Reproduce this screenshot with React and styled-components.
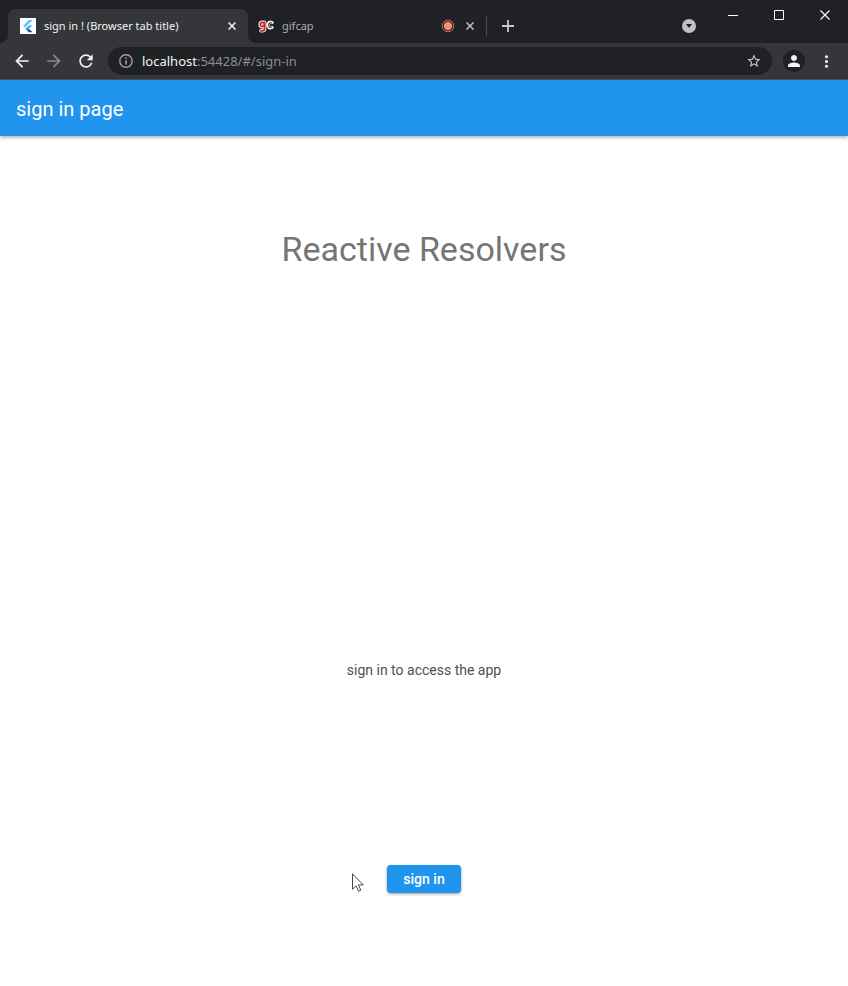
import React from "react";
import styled, { createGlobalStyle } from "styled-components";
import { MdArrowBack, MdArrowForward, MdRefresh, MdStarBorder, MdPerson, MdMoreVert } from "react-icons/md";

const GlobalStyle = createGlobalStyle`
  *, *::before, *::after { box-sizing: border-box; }
  body { margin: 0; background: #fff; }
  button, input { font: inherit; border: 0; padding: 0; margin: 0; }
  svg { display: block; flex: none; }
`;

const Window = styled.div`
  min-height: 100vh;
  display: flex;
  flex-direction: column;
  font-family: Roboto, sans-serif;
`;

const TabStrip = styled.header`
  display: flex;
  height: 43px;
  padding-left: 8px;
  background: #202124;
  color: #bdc1c6;
  font: 11px/16px "Noto Sans", sans-serif;
`;

const Tabs = styled.div`
  display: flex;
  align-items: flex-end;
`;

const Tab = styled.div`
  position: relative;
  display: flex;
  align-items: center;
  gap: 8px;
  width: 240px;
  height: 34px;
  padding: 0 10px 0 12px;
  border-radius: 8px 8px 0 0;
  background: ${(p) => (p.$active ? "#35363a" : "transparent")};
  color: ${(p) => (p.$active ? "#f1f3f4" : "#a9adb2")};

  &::before, &::after {
    content: "";
    display: ${(p) => (p.$active ? "block" : "none")};
    position: absolute;
    bottom: 0;
    width: 8px;
    height: 8px;
  }
  &::before {
    right: 100%;
    background: radial-gradient(circle at 0 0, transparent 8px, #35363a 8px);
  }
  &::after {
    left: 100%;
    background: radial-gradient(circle at 100% 0, transparent 8px, #35363a 8px);
  }
`;

const PlainTab = styled(Tab)`
  width: 238px;
  padding: 0 9px 0 10px;
`;

const TabTitle = styled.button`
  flex: 1;
  min-width: 0;
  overflow: hidden;
  background: none;
  color: inherit;
  text-align: left;
  white-space: nowrap;
`;

const IconButton = styled.button`
  display: grid;
  place-items: center;
  flex: none;
  width: ${(p) => p.$size || 32}px;
  height: ${(p) => p.$size || 32}px;
  border-radius: 50%;
  background: ${(p) => p.$fill || "transparent"};
  color: ${(p) => p.$color || "#f1f3f4"};
`;

const NewTab = styled(IconButton)`
  margin: 10px 0 0 5px;
`;

const Divider = styled.span`
  align-self: flex-start;
  width: 1px;
  height: 20px;
  margin-top: 16px;
  background: #4a4c50;
`;

const WindowControls = styled.div`
  display: flex;
  margin-left: auto;
`;

const TabSearch = styled(IconButton)`
  margin: 19px 14px 0 0;
`;

const WindowButton = styled.button`
  display: grid;
  place-items: center;
  width: 46px;
  height: 30px;
  background: none;
  color: #fff;
`;

const Toolbar = styled.nav`
  display: flex;
  align-items: center;
  height: 37px;
  padding-left: 6px;
  background: #35363a;
  border-bottom: 1px solid #53565b;
`;

const AddressBar = styled.div`
  display: flex;
  flex: 1;
  align-items: center;
  gap: 9px;
  height: 28px;
  margin: 0 11px 0 6px;
  padding: 0 7px 0 11px;
  border-radius: 14px;
  background: #202124;
  color: #9aa0a6;
`;

const Address = styled.a`
  flex: 1;
  color: #8b8f94;
  text-decoration: none;
  font: 13px/20px "Noto Sans", sans-serif;
`;

const Host = styled.span`
  color: #f1f3f4;
`;

const AppBar = styled.header`
  display: flex;
  align-items: center;
  height: 56px;
  padding: 2px 16px 0;
  background: #2194ee;
  color: #fff;
  box-shadow: 0 1px 4px rgba(0, 0, 0, 0.4);
`;

const PageTitle = styled.h1`
  margin: 0;
  font-size: 20px;
  line-height: 24px;
  font-weight: 400;
`;

const Content = styled.main`
  flex: 1;
  display: grid;
  grid-template-areas: "brand" "." "hint" "action";
  grid-template-rows: 113fr 103fr 102fr 107fr;
  place-items: center;
`;

const Brand = styled.h2`
  grid-area: brand;
  margin: 0;
  color: #757575;
  font-size: 34px;
  line-height: 40px;
  font-weight: 400;
`;

const Hint = styled.p`
  grid-area: hint;
  margin: 0;
  color: #505050;
  font-size: 14px;
  line-height: 20px;
`;

const Action = styled.div`
  grid-area: action;
  position: relative;
`;

const SignInButton = styled.button`
  display: block;
  height: 28px;
  padding: 0 16px;
  border-radius: 4px;
  background: #2194ee;
  color: #fff;
  font-size: 14px;
  font-weight: 500;
  box-shadow: 0 1px 3px rgba(0, 0, 0, 0.4);
`;

const Pointer = styled.svg`
  position: absolute;
  top: 8px;
  right: calc(100% + 23px);
`;

const CloseIcon = ({ size = 8, width = 1.5 }) => (
  <svg width={size} height={size} viewBox={`0 0 ${size} ${size}`} stroke="currentColor" strokeWidth={width}>
    <path d={`M.5 .5 ${size - 0.5} ${size - 0.5}M${size - 0.5} .5 .5 ${size - 0.5}`} />
  </svg>
);

const FlutterIcon = () => (
  <svg width="16" height="16" viewBox="0 0 16 16">
    <path fill="#fff" d="M0 0h16v16H0z" />
    <path fill="#54c5f8" d="M9 2h3.6L5 9.4 3.2 7.7z" />
    <path fill="#45b7f2" d="M9 7.2h3.6L8.8 10.8 7 9.1z" />
    <path fill="#2a9de5" d="M5.3 10.8 7 9.1l1.8 1.7L7 12.5z" />
    <path fill="#01579b" d="M7 12.5 8.8 10.8l3.8 3.4H9z" />
  </svg>
);

const GifcapIcon = () => (
  <svg width="16" height="16" viewBox="0 0 16 16" fill="none" strokeLinecap="round" strokeLinejoin="round">
    <g stroke="#f4f0ee" strokeWidth="3.6">
      <circle cx="4.4" cy="6.4" r="2.2" />
      <path d="M6.6 4.4v6.4q0 2-2.2 2H3M13.8 4.6Q10.4 3.4 10.2 7q.2 3.6 3.6 2.4" />
    </g>
    <circle cx="4.4" cy="6.4" r="2.1" stroke="#c5262d" strokeWidth="1.7" />
    <path d="M6.6 4v6.8q0 2-2.2 2H2.8" stroke="#c5262d" strokeWidth="1.7" />
    <path d="M13.6 5Q11 4.2 10.8 7q.2 2.8 2.8 2" stroke="#3a3636" strokeWidth="1.2" />
    <path d="M12.6 7h3.4" stroke="#202124" strokeWidth="1.4" strokeLinecap="butt" />
  </svg>
);

const RecordingIcon = () => (
  <svg width="14" height="14" viewBox="0 0 14 14">
    <circle cx="7" cy="7" r="5.8" fill="none" stroke="#c96f69" />
    <circle cx="7" cy="7" r="4.2" fill="#f28b82" />
  </svg>
);

const InfoIcon = () => (
  <svg width="14" height="14" viewBox="0 0 14 14" fill="none" stroke="currentColor" strokeWidth="1.4">
    <circle cx="7" cy="7" r="6.2" />
    <path d="M7 3.4V5M7 6.2v4.4" strokeWidth="1.6" />
  </svg>
);

export default function App() {
  return (
    <Window>
      <GlobalStyle />
      <TabStrip>
        <Tabs>
          <Tab $active>
            <FlutterIcon />
            <TabTitle>sign in ! (Browser tab title)</TabTitle>
            <IconButton $size={12} aria-label="Close sign in tab"><CloseIcon /></IconButton>
          </Tab>
          <PlainTab>
            <GifcapIcon />
            <TabTitle>gifcap</TabTitle>
            <RecordingIcon />
            <IconButton $size={14} $color="#bdc1c6" aria-label="Close gifcap tab"><CloseIcon /></IconButton>
          </PlainTab>
        </Tabs>
        <Divider />
        <NewTab $color="#c8cbd0" aria-label="New tab">
          <svg width="12" height="12" viewBox="0 0 12 12" stroke="currentColor" strokeWidth="1.8">
            <path d="M6 0v12M0 6h12" />
          </svg>
        </NewTab>
        <WindowControls>
          <TabSearch $size={14} $fill="#bdc1c6" $color="#202124" aria-label="Search tabs">
            <svg width="6" height="4" viewBox="0 0 6 4" fill="currentColor"><path d="M0 0h6L3 4z" /></svg>
          </TabSearch>
          <WindowButton aria-label="Minimize">
            <svg width="10" height="10" viewBox="0 0 10 10" stroke="currentColor"><path d="M0 5.5h10" /></svg>
          </WindowButton>
          <WindowButton aria-label="Maximize">
            <svg width="10" height="10" viewBox="0 0 10 10" fill="none" stroke="currentColor"><path d="M.5.5h9v9h-9z" /></svg>
          </WindowButton>
          <WindowButton aria-label="Close window"><CloseIcon size={10} width={1.1} /></WindowButton>
        </WindowControls>
      </TabStrip>
      <Toolbar>
        <IconButton aria-label="Back"><MdArrowBack size={20} /></IconButton>
        <IconButton $color="#87898d" aria-label="Forward"><MdArrowForward size={20} /></IconButton>
        <IconButton aria-label="Reload"><MdRefresh size={20} /></IconButton>
        <AddressBar>
          <InfoIcon />
          <Address href="#/sign-in"><Host>localhost</Host>:54428/#/sign-in</Address>
          <IconButton $size={22} $color="#c8cbd0" aria-label="Bookmark this page"><MdStarBorder size={16} /></IconButton>
        </AddressBar>
        <IconButton $size={22} $fill="#202124" aria-label="Profile"><MdPerson size={18} /></IconButton>
        <IconButton $size={43} aria-label="Menu"><MdMoreVert size={19} /></IconButton>
      </Toolbar>
      <AppBar>
        <PageTitle>sign in page</PageTitle>
      </AppBar>
      <Content>
        <Brand>Reactive Resolvers</Brand>
        <Hint>sign in to access the app</Hint>
        <Action>
          <SignInButton>sign in</SignInButton>
          <Pointer width="12" height="19" viewBox="0 0 12 19" aria-hidden="true">
            <path d="M.5.8v15.4l3.6-3.4 2.4 5.4 2.3-1-2.4-5.3h4.8z" fill="#fff" stroke="#45454f" />
          </Pointer>
        </Action>
      </Content>
    </Window>
  );
}
